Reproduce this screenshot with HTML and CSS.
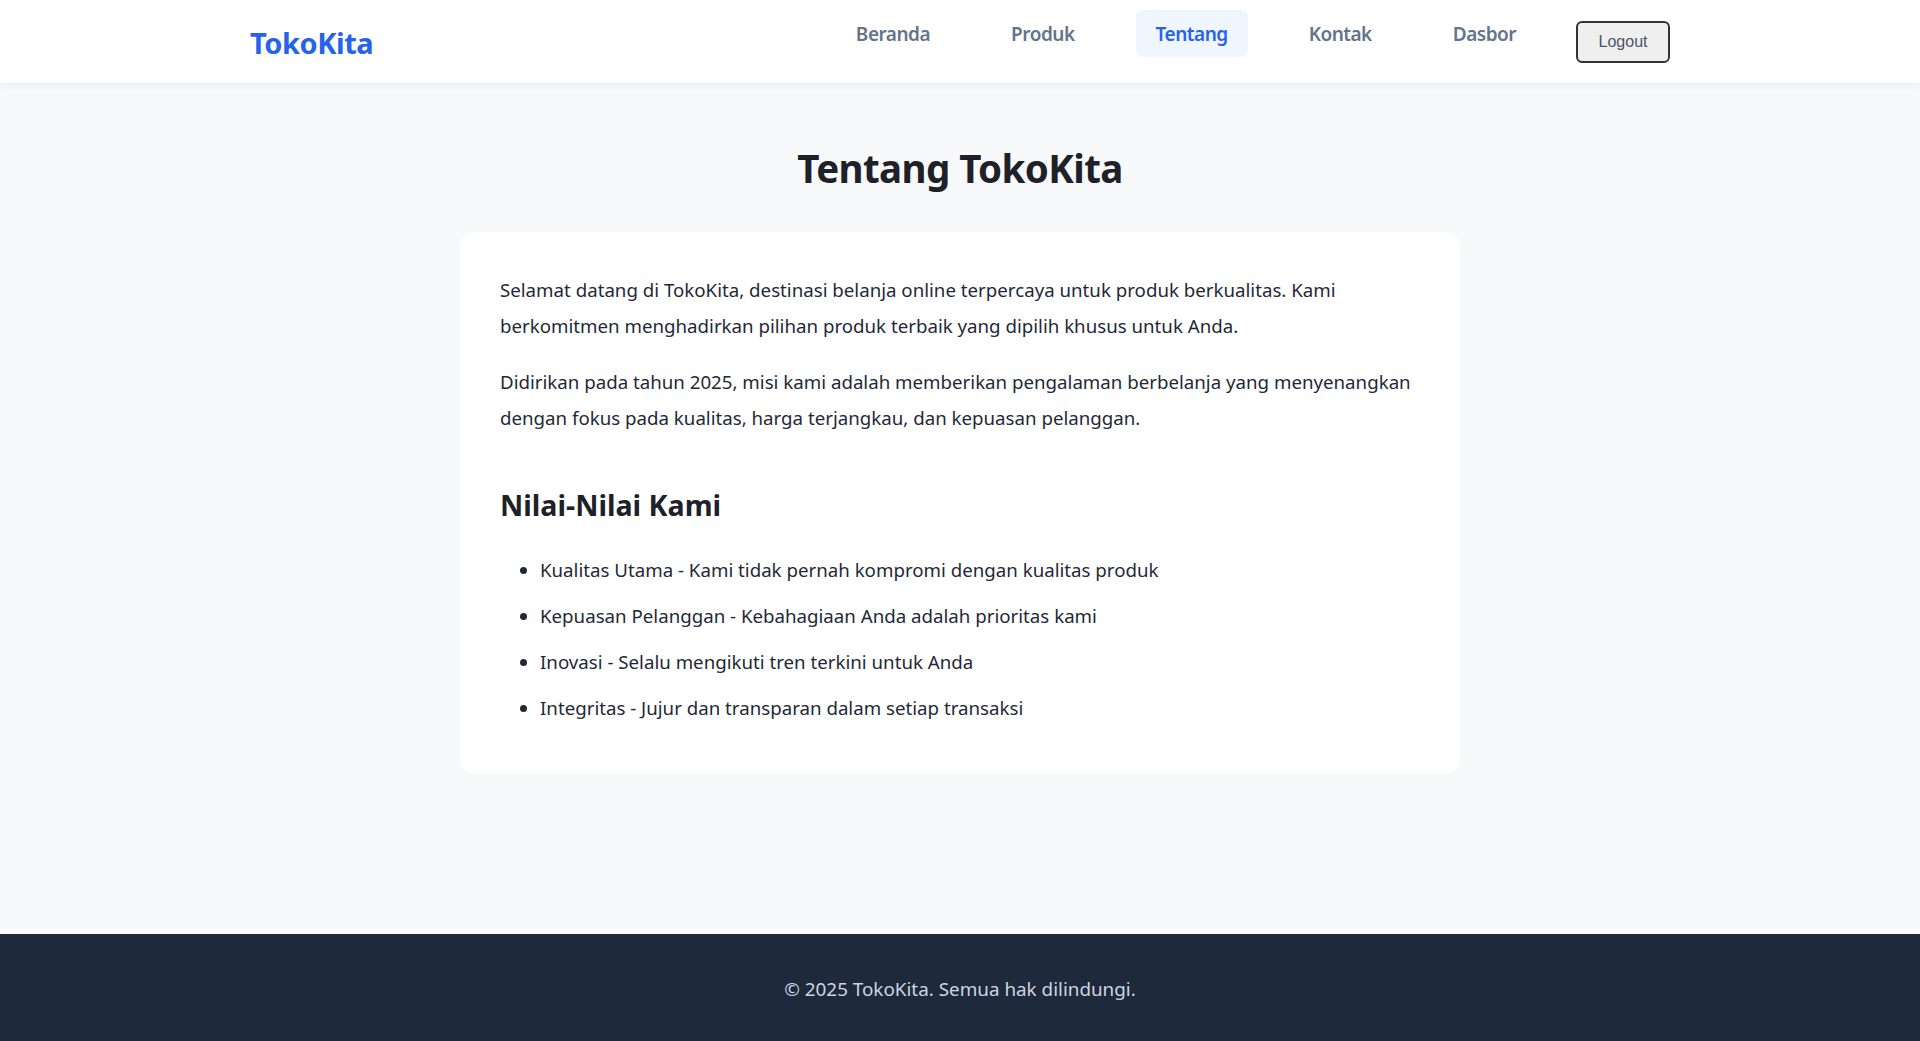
FILE: index.html
```html
<!DOCTYPE html>
<html lang="id">
<head>
<meta charset="utf-8">
<title>Tentang - TokoKita</title>
<link rel="stylesheet" href="styles.css">
</head>
<body>
<header class="site-header">
  <div class="header-inner">
    <a class="logo" href="#">TokoKita</a>
    <nav class="main-nav">
      <ul class="nav-list">
        <li><a class="nav-link" href="#">Beranda</a></li>
        <li><a class="nav-link" href="#">Produk</a></li>
        <li><a class="nav-link active" href="#">Tentang</a></li>
        <li><a class="nav-link" href="#">Kontak</a></li>
        <li><a class="nav-link" href="#">Dasbor</a></li>
      </ul>
      <button class="logout-btn" type="button">Logout</button>
    </nav>
  </div>
</header>

<main class="page">
  <h1 class="page-title">Tentang TokoKita</h1>
  <section class="about-card">
    <p>Selamat datang di TokoKita, destinasi belanja online terpercaya untuk produk berkualitas. Kami berkomitmen menghadirkan pilihan produk terbaik yang dipilih khusus untuk Anda.</p>
    <p>Didirikan pada tahun 2025, misi kami adalah memberikan pengalaman berbelanja yang menyenangkan dengan fokus pada kualitas, harga terjangkau, dan kepuasan pelanggan.</p>
    <h2 class="section-title">Nilai-Nilai Kami</h2>
    <ul class="values-list">
      <li>Kualitas Utama - Kami tidak pernah kompromi dengan kualitas produk</li>
      <li>Kepuasan Pelanggan - Kebahagiaan Anda adalah prioritas kami</li>
      <li>Inovasi - Selalu mengikuti tren terkini untuk Anda</li>
      <li>Integritas - Jujur dan transparan dalam setiap transaksi</li>
    </ul>
  </section>
</main>

<footer class="site-footer">
  <p>&copy; 2025 TokoKita. Semua hak dilindungi.</p>
</footer>
</body>
</html>
```

FILE: styles.css
```css
* { box-sizing: border-box; }
body {
  margin: 0;
  min-height: 100vh;
  display: flex;
  flex-direction: column;
  background: #f8f9fa;
  font-family: "Noto Sans", "Open Sans", sans-serif;
  color: #1f2937;
}
.site-header {
  background: #fff;
  box-shadow: 0 2px 8px rgba(0, 0, 0, 0.06);
  padding: 10px 0;
}
.header-inner {
  max-width: 1420px;
  margin: 0 auto;
  display: flex;
  justify-content: space-between;
  align-items: center;
}
.logo {
  margin-top: 3px;
  color: #2563eb;
  font-size: 29px;
  font-weight: 700;
  letter-spacing: -0.45px;
  text-decoration: none;
  line-height: 1.2;
}
.main-nav { display: flex; align-items: center; gap: 40px; }
.nav-list {
  display: flex;
  gap: 41px;
  list-style: none;
  margin: 0 0 16px;
  padding: 0;
}
.nav-link {
  display: block;
  padding: 11px 20px 9px;
  border-radius: 8px;
  color: #64748b;
  font-size: 19px;
  font-weight: 600;
  letter-spacing: -0.5px;
  line-height: 27px;
  text-decoration: none;
}
.nav-link.active { color: #2563eb; background: #eff6ff; }
.logout-btn {
  font-family: "Liberation Sans", Arial, sans-serif;
  font-size: 16px;
  padding: 10px 20.5px;
  border: 2px solid #333;
  border-radius: 6px;
  background: #efefef;
  color: #4b5563;
}
.page { flex: 1; padding: 61px 20px 60px; }
.page-title {
  margin: 0 0 40px;
  text-align: center;
  font-size: 38.5px;
  letter-spacing: -0.6px;
  line-height: 48px;
  font-weight: 700;
  color: #1f2128;
}
.about-card {
  max-width: 1000px;
  margin: 0 auto;
  background: #fff;
  border-radius: 16px;
  padding: 40px;
}
.about-card p {
  margin: 0 0 20px;
  font-size: 18.7px;
  line-height: 36px;
}
.section-title {
  margin: 51px 0 30px;
  font-size: 28.6px;
  line-height: 35px;
  font-weight: 700;
  color: #1f2128;
}
.values-list { margin: 0 0 8px; padding-left: 40px; }
.values-list li { font-size: 18.7px; line-height: 36px; margin-bottom: 10px; }
.values-list li:last-child { margin-bottom: 0; }
.site-footer {
  background: #1e293b;
  color: #cbd5e1;
  text-align: center;
  padding: 42px 20px 38px;
}
.site-footer p { margin: 0; font-size: 18.85px; line-height: 27px; }
```
